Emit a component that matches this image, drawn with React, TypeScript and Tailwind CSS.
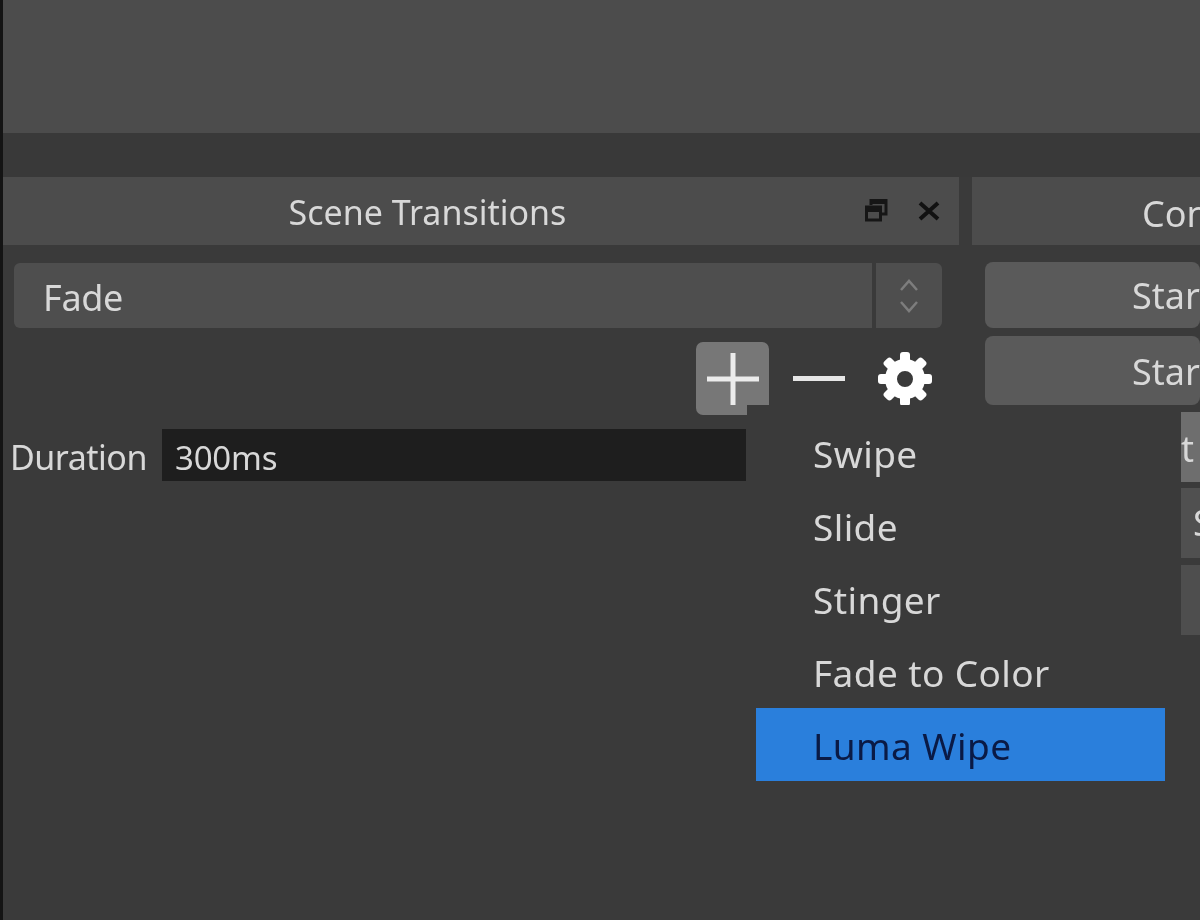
const font = "font-['Noto_Sans','Open_Sans',sans-serif]";

const menuItems = ["Swipe", "Slide", "Stinger", "Fade to Color"];

function FloatIcon() {
  return (
    <svg className="blur-[0.5px]" width="24" height="25" viewBox="0 0 24 25" fill="none" stroke="#161616">
      <path d="M7 7 V2.5 H22 V16 H17" strokeWidth="3" />
      <path d="M7 4 H22" strokeWidth="4" />
      <rect x="2.5" y="9" width="14" height="13" strokeWidth="3" />
      <path d="M2.5 11.5 H16.5" strokeWidth="5" />
    </svg>
  );
}

function CloseIcon() {
  return (
    <svg className="blur-[0.5px]" width="22" height="22" viewBox="0 0 22 22" stroke="#111" strokeWidth="4" fill="none">
      <path d="M2 3 L20 19 M20 3 L2 19" />
    </svg>
  );
}

function GearIcon() {
  const teeth = [0, 45, 90, 135, 180, 225, 270, 315];
  return (
    <svg className="blur-[0.5px]" width="56" height="56" viewBox="0 0 56 56" fill="none">
      {teeth.map((a) => (
        <rect key={a} x="23" y="1" width="10" height="12" rx="3" fill="#fff" transform={`rotate(${a} 28 28)`} />
      ))}
      <circle cx="28" cy="28" r="14" stroke="#fff" strokeWidth="12" />
    </svg>
  );
}

export default function App() {
  return (
    <div className={`${font} relative w-[1200px] h-[920px] overflow-hidden flex flex-col bg-[#3a3a3a] border-l-[3px] border-[#141414] text-[#d8d8d8] text-[34px] leading-none`}>
      <div className="h-[133px] shrink-0 bg-[#4c4c4c]" />
      <div className="h-[44px] shrink-0 bg-[#393939]" />

      <div className="flex flex-1">
        {/* Scene Transitions dock */}
        <div className="w-[956px] shrink-0 flex flex-col">
          <div className="relative h-[68px] bg-[#4c4c4c] flex items-center justify-center pr-[107px]">
            <span className="blur-[0.5px] mt-[1px]">Scene Transitions</span>
            <div className="absolute right-[19px] top-[21px] flex items-center gap-[30px]">
              <FloatIcon />
              <CloseIcon />
            </div>
          </div>

          <div className="mt-[18px] ml-[11px] mr-[17px] h-[65px] flex rounded-[6px] overflow-hidden">
            <div className="flex-1 bg-[#4e4e4e] flex items-center pl-[29px]">
              <span className="blur-[0.5px] text-[36px] tracking-[-0.3px] mt-[5px]">Fade</span>
            </div>
            <div className="w-[66px] ml-[4px] bg-[#4e4e4e] flex flex-col items-center justify-center gap-[8px]">
              <svg className="blur-[0.5px]" width="20" height="14" viewBox="0 0 20 14" fill="none" stroke="#7d7d7d" strokeWidth="2.5"><path d="M2 12 L10 3 L18 12" /></svg>
              <svg className="blur-[0.5px]" width="20" height="14" viewBox="0 0 20 14" fill="none" stroke="#7d7d7d" strokeWidth="2.5"><path d="M2 2 L10 11 L18 2" /></svg>
            </div>
          </div>

          <div className="mt-[14px] h-[73px] flex items-center pl-[693px]">
            <div className="w-[73px] h-[73px] rounded-[7px] bg-[#777777] flex items-center justify-center">
              <svg className="blur-[0.5px]" width="52" height="52" viewBox="0 0 52 52" stroke="#ececec" strokeWidth="5"><path d="M26 0 V52 M0 26 H52" /></svg>
            </div>
            <div className="ml-[24px] w-[52px] h-[5px] bg-[#e6e6e6] blur-[0.5px]" />
            <div className="ml-[32px]"><GearIcon /></div>
          </div>

          <div className="mt-[14px] h-[52px] flex items-center">
            <span className="ml-[7px] w-[152px] blur-[0.5px] text-[34px] tracking-[-0.5px] mt-[4px]">Duration</span>
            <div className="w-[584px] h-full bg-[#1e1e1e] flex items-center pl-[13px]">
              <span className="text-[33px] tracking-[-0.2px] blur-[0.5px] mt-[4px]">300ms</span>
            </div>
          </div>
        </div>

        {/* Controls dock, cut off by the window */}
        <div className="ml-[13px] flex-1 flex flex-col min-w-0">
          <div className="h-[68px] bg-[#4c4c4c] flex items-center pl-[170px] overflow-hidden">
            <span className="blur-[0.5px] text-[36px] mt-[5px]">Controls</span>
          </div>
          <div className="mt-[17px] ml-[13px] flex flex-col">
            <div className="h-[66px] rounded-[8px] bg-[#5a5a5a] flex items-center pl-[147px] whitespace-nowrap overflow-hidden">
              <span className="blur-[0.5px] text-[36px] mt-[2px]">Start</span>
            </div>
            <div className="mt-[8px] h-[69px] rounded-[8px] bg-[#5a5a5a] flex items-center pl-[147px] whitespace-nowrap overflow-hidden">
              <span className="blur-[0.5px] text-[36px] mt-[3px]">Start</span>
            </div>
            <div className="mt-[7px] h-[70px] bg-[#6e6e6e] flex items-center pl-[196px] whitespace-nowrap overflow-hidden">
              <span className="blur-[0.5px] text-[36px] mt-[3px]">t</span>
            </div>
            <div className="mt-[6px] h-[70px] bg-[#505050] flex items-center pl-[208px] whitespace-nowrap overflow-hidden">
              <span className="blur-[0.5px] text-[36px]">S</span>
            </div>
            <div className="mt-[7px] h-[70px] bg-[#4e4e4e]" />
          </div>
        </div>
      </div>

      {/* Add transition popup menu */}
      <div className="absolute left-[744px] top-[405px] w-[434px] pt-[11px] pb-[60px] bg-[#3a3a3a] flex flex-col">
        {menuItems.map((item) => (
          <div key={item} className="h-[73px] flex items-center pl-[66px]">
            <span className="blur-[0.5px] text-[37px] tracking-[0.4px] mt-[2px]">{item}</span>
          </div>
        ))}
        <div className="ml-[9px] w-[409px] h-[73px] bg-[#2a7fdc] text-[#0a1a45] flex items-center pl-[57px]">
          <span className="blur-[0.5px] text-[37px] tracking-[0.4px] mt-[1px]">Luma Wipe</span>
        </div>
      </div>
    </div>
  );
}
